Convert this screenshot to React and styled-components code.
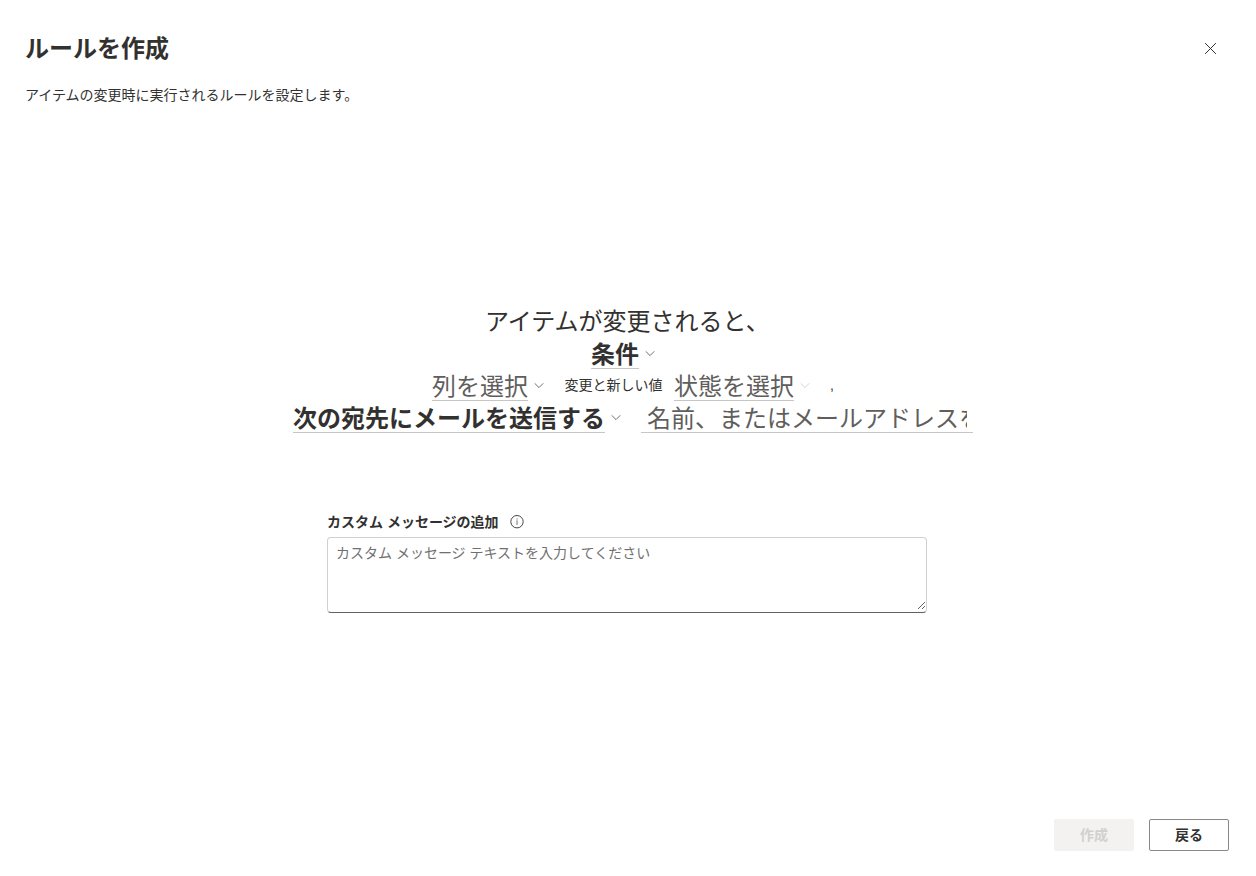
import React from "react"
import styled, { createGlobalStyle } from "styled-components"

const GlobalStyle = createGlobalStyle`
  * {
    box-sizing: border-box;
  }

  body {
    margin: 0;
    background: #fff;
    color: #323130;
    font-family: "Liberation Sans", "Noto Sans CJK JP", sans-serif;
    font-size: 14px;
    line-height: 20px;
  }
`

const Dialog = styled.div`
  display: flex;
  flex-direction: column;
  height: 876px;
  padding: 32px 27px 25px 25px;
`

const Header = styled.header`
  display: flex;
  justify-content: space-between;
  align-items: center;
  height: 32px;
`

const Title = styled.h1`
  margin: 0;
  padding-top: 2px;
  font-size: 24px;
  line-height: 32px;
  font-weight: 700;
`

const CloseButton = styled.button`
  display: flex;
  align-items: center;
  justify-content: center;
  width: 32px;
  height: 32px;
  margin-right: 3px;
  padding: 0;
  border: none;
  background: none;
  color: #323130;
`

const Description = styled.p`
  margin: 21px 0 0;
`

const Sentence = styled.section`
  width: 680px;
  margin: 200px 0 0 268px;
`

const SentenceRow = styled.div`
  display: flex;
  align-items: center;
  height: 32px;
  padding-left: ${(props) => props.$indent || 0}px;
  white-space: nowrap;
`

const Lead = styled.span`
  padding-top: 2px;
  font-size: 24px;
  line-height: 32px;
`

const Picker = styled.button`
  display: flex;
  align-items: center;
  gap: 6px;
  padding: 0;
  border: none;
  background: none;
  font-family: inherit;
  color: ${(props) => (props.$placeholder ? "#605e5c" : "#323130")};
  font-weight: ${(props) => (props.$placeholder ? 400 : 700)};
`

const PickerLabel = styled.span`
  height: 32px;
  padding-top: 2px;
  border-bottom: 1px solid #c8c6c4;
  font-size: 24px;
  line-height: 32px;
`

const JoinText = styled.span`
  margin: 0 11.5px 0 20.5px;
`

const Comma = styled.span`
  margin-left: 20px;
`

const Recipient = styled.div`
  width: 332px;
  height: 32px;
  margin-left: 20px;
  padding: 0 6px;
  border-bottom: 1px solid #c8c6c4;
`

const RecipientInput = styled.input`
  display: block;
  width: 100%;
  height: 31px;
  padding: 4px 0 0;
  border: none;
  outline: none;
  background: none;
  font-family: inherit;
  font-size: 24px;
  line-height: 27px;

  &::placeholder {
    color: #605e5c;
    opacity: 1;
  }
`

const Message = styled.section`
  width: 600px;
  margin: 79px 0 0 302px;
`

const MessageLabel = styled.label`
  display: flex;
  align-items: center;
  gap: 11px;
  height: 20px;
  margin-bottom: 5px;
  font-weight: 700;
`

const MessageField = styled.div`
  height: 76px;
  border: 1px solid #d1d1d1;
  border-bottom-color: #616161;
  border-radius: 4px;
`

const MessageInput = styled.textarea`
  display: block;
  width: 100%;
  height: 72px;
  padding: 5px 8px;
  border: none;
  background: none;
  outline: none;
  resize: both;
  font-family: inherit;
  font-size: 14px;
  line-height: 20px;

  &::placeholder {
    color: #707070;
    opacity: 1;
  }
`

const Footer = styled.footer`
  display: flex;
  justify-content: flex-end;
  gap: 15px;
  margin-top: auto;
`

const Button = styled.button`
  width: 80px;
  height: 32px;
  padding: 0;
  border: 1px solid #8a8886;
  border-radius: 2px;
  background: #fff;
  color: #323130;
  font-family: inherit;
  font-size: 14px;
  line-height: 20px;
  font-weight: 700;

  &:disabled {
    border-color: #f3f2f1;
    background: #f3f2f1;
    color: #d2d0ce;
  }
`

const Chevron = ({ color = "#605e5c" }) => (
  <svg width="10" height="10" viewBox="0 0 10 10" fill="none" stroke={color} strokeWidth="0.9">
    <path d="M0.7 3.3 5 7.6 9.3 3.3" />
  </svg>
)

const CloseIcon = () => (
  <svg width="12" height="12" viewBox="0 0 12 12" fill="none" stroke="currentColor">
    <path d="M1.1 1.1 11.9 11.9M11.9 1.1 1.1 11.9" />
  </svg>
)

const InfoIcon = () => (
  <svg width="14" height="14" viewBox="0 0 14 14" fill="none" stroke="#323130">
    <circle cx="7" cy="6.7" r="6.2" strokeWidth="0.9" />
    <path d="M7 5.3v4.6M7 3.4v1.1" strokeWidth="0.7" />
  </svg>
)

export default function App() {
  return (
    <>
      <GlobalStyle />
      <Dialog>
        <Header>
          <Title>ルールを作成</Title>
          <CloseButton aria-label="閉じる">
            <CloseIcon />
          </CloseButton>
        </Header>
        <Description>アイテムの変更時に実行されるルールを設定します。</Description>

        <Sentence>
          <SentenceRow $indent={192}>
            <Lead>アイテムが変更されると、</Lead>
          </SentenceRow>
          <SentenceRow $indent={298}>
            <Picker>
              <PickerLabel>条件</PickerLabel>
              <Chevron />
            </Picker>
          </SentenceRow>
          <SentenceRow $indent={139}>
            <Picker $placeholder>
              <PickerLabel>列を選択</PickerLabel>
              <Chevron />
            </Picker>
            <JoinText>変更と新しい値</JoinText>
            <Picker $placeholder>
              <PickerLabel>状態を選択</PickerLabel>
              <Chevron color="#d2d0ce" />
            </Picker>
            <Comma>,</Comma>
          </SentenceRow>
          <SentenceRow>
            <Picker>
              <PickerLabel>次の宛先にメールを送信する</PickerLabel>
              <Chevron />
            </Picker>
            <Recipient>
              <RecipientInput placeholder="名前、またはメールアドレスを入力" />
            </Recipient>
          </SentenceRow>
        </Sentence>

        <Message>
          <MessageLabel htmlFor="message">
            カスタム メッセージの追加
            <InfoIcon />
          </MessageLabel>
          <MessageField>
            <MessageInput id="message" placeholder="カスタム メッセージ テキストを入力してください" />
          </MessageField>
        </Message>

        <Footer>
          <Button disabled>作成</Button>
          <Button>戻る</Button>
        </Footer>
      </Dialog>
    </>
  )
}
